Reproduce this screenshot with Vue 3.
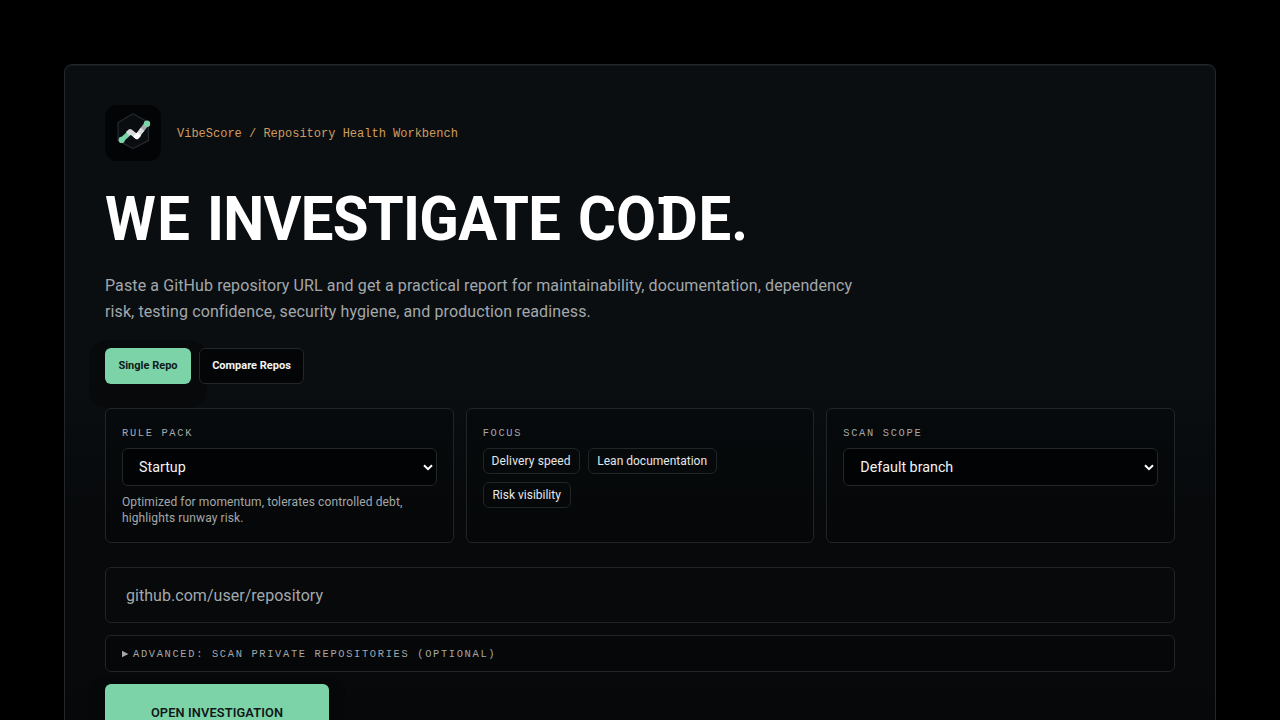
<script setup>
import { ref } from 'vue'

const focus = ['Delivery speed', 'Lean documentation', 'Risk visibility']
const pack = ref('Startup')
const scope = ref('Default branch')
</script>

<template>
  <main class="page">
    <section class="panel">
      <header class="brand">
        <div class="logo">
          <svg width="56" height="56" viewBox="0 0 56 56" fill="none">
            <path d="M28 8.8 43.4 17.5V35.5L28 43.6 13.1 35.5V17.5Z" fill="#0a0d10" stroke="#24292d" stroke-width="1.3" />
            <path d="M17.2 34.6 25.2 27.2" stroke="#7dd3a8" stroke-width="4.8" stroke-linecap="round" />
            <path d="M36.5 25.4 42 18.6" stroke="#a6a9ac" stroke-width="4.8" />
            <path d="M22.6 28.8 25.1 26.4 31.8 31.6 37.5 24.2" stroke="#d9dbdc" stroke-width="4.8" stroke-linejoin="round" />
            <path d="M29.8 30 31.8 31.8 34.4 29" stroke="#fff" stroke-width="4.8" stroke-linejoin="round" />
            <circle cx="16.7" cy="34.9" r="3.1" fill="#7dd3a8" />
            <circle cx="42" cy="18.8" r="3.2" fill="#7dd3a8" />
          </svg>
        </div>
        <p class="eyebrow">VibeScore / Repository Health Workbench</p>
      </header>

      <h1><span class="w1">WE</span> <span class="w2">INVESTIGATE</span> <span class="w3">CO<span class="slab">D</span>E.</span></h1>
      <p class="lead">Paste a GitHub repository URL and get a practical report for maintainability, documentation, dependency<br />risk, testing confidence, security hygiene, and production readiness.</p>

      <div class="tabs">
        <button class="tab active">Single Repo</button>
        <button class="tab other">Compare Repos</button>
      </div>

      <div class="cards">
        <div class="card">
          <div class="label">RULE PACK</div>
          <div class="select">
            <span>{{ pack }}</span>
            <svg width="10" height="7" viewBox="0 0 10 7"><path d="M1 1.2 5 5.2 9 1.2" fill="none" stroke="#fff" stroke-width="2" /></svg>
          </div>
          <p class="hint">Optimized for momentum, tolerates controlled debt,<br />highlights runway risk.</p>
        </div>
        <div class="card">
          <div class="label">FOCUS</div>
          <div class="chips">
            <span v-for="(item, i) in focus" :key="item" class="chip" :class="'chip' + i">{{ item }}</span>
          </div>
        </div>
        <div class="card">
          <div class="label">SCAN SCOPE</div>
          <div class="select wide">
            <span>{{ scope }}</span>
            <svg width="10" height="7" viewBox="0 0 10 7"><path d="M1 1.2 5 5.2 9 1.2" fill="none" stroke="#fff" stroke-width="2" /></svg>
          </div>
        </div>
      </div>

      <div class="url"><span>github.com/user/repository</span></div>
      <div class="advanced">
        <svg width="7" height="8" viewBox="0 0 7 8"><path d="M0 .8 6.4 4 0 7.2Z" fill="#a3a8ab" /></svg>
        <span>ADVANCED: SCAN PRIVATE REPOSITORIES (OPTIONAL)</span>
      </div>
      <button class="submit"><span>OPEN INVESTIGATION</span></button>
    </section>
  </main>
</template>

<style>
html,
body {
  background: #000;
  overflow: hidden;
}
</style>

<style scoped>
* {
  box-sizing: border-box;
}
.page {
  height: 720px;
  padding: 64px 64px 0;
  overflow: hidden;
  background: #000;
  font-family: Roboto, "Liberation Sans", sans-serif;
}
.panel {
  height: 900px;
  padding: 40px;
  border: 1px solid #22272a;
  border-radius: 8px;
  background: linear-gradient(180deg, #0a0e11 0, #0a0e11 310px, #07090b 450px, #07090b 600px, #050708 700px);
  box-shadow: inset 0 1px 0 #171b1e;
}
.brand {
  display: flex;
  align-items: center;
  gap: 16px;
  height: 56px;
}
.logo {
  width: 56px;
  height: 56px;
  border-radius: 12px;
  background: #030405;
}
.logo svg {
  display: block;
}
p,
h1 {
  margin: 0;
}
.eyebrow {
  padding-top: 2px;
  font: 12px/18px "Liberation Mono", monospace;
  color: #d09c5e;
  white-space: nowrap;
}
h1 {
  display: flex;
  margin-top: 27px;
  height: 64px;
  font: 700 60.5px/64px Roboto, sans-serif;
  color: #fff;
  white-space: nowrap;
}
h1 > span {
  display: block;
  transform-origin: 0 50%;
  transform: scaleX(0.96);
}
.w1 {
  width: 102px;
  letter-spacing: 1.5px;
}
.w2 {
  width: 371px;
  letter-spacing: -0.75px;
}
.slab {
  position: relative;
  margin-left: 4px;
  letter-spacing: 1px;
}
.slab::before,
.slab::after {
  content: "";
  position: absolute;
  left: -1px;
  width: 8px;
  height: 7px;
  background: #fff;
}
.slab::before {
  top: 13px;
}
.slab::after {
  bottom: 15px;
}
.lead {
  margin-top: 21px;
  font-size: 16px;
  line-height: 26px;
  letter-spacing: 0.106px;
  color: #a3a8ab;
  white-space: nowrap;
}
.tabs {
  display: flex;
  gap: 8px;
  margin-top: 23px;
}
button {
  font-family: inherit;
  border: 0;
  padding: 0;
  white-space: nowrap;
}
.tab {
  height: 36px;
  padding-bottom: 1px;
  border-radius: 6px;
  font-size: 11px;
  font-weight: 700;
}
.active {
  width: 86px;
  background: #7dd3a8;
  color: #10191a;
  box-shadow: 0 8px 0 16px #07090b;
}
.other {
  position: relative;
  width: 105px;
  border: 1px solid #22272a;
  background: #040506;
  color: #f2f4f5;
}
.cards {
  position: relative;
  display: grid;
  grid-template-columns: repeat(3, 1fr);
  gap: 12px;
  margin-top: 24px;
}
.card {
  height: 135px;
  padding: 16px;
  border: 1px solid #202528;
  border-radius: 6px;
  background: linear-gradient(180deg, #070a0c, #050708);
}
.label {
  height: 15px;
  margin-bottom: 8px;
  font: 10.4px/16px "Liberation Mono", monospace;
  letter-spacing: 1.66px;
  color: #a3a8ab;
}
.select {
  display: flex;
  align-items: center;
  justify-content: space-between;
  height: 38px;
  padding: 0 3px 0 16px;
  border: 1px solid #22272a;
  border-radius: 6px;
  background: #020304;
  color: #f2f4f5;
  font-size: 14.3px;
}
.hint {
  margin-top: 8px;
  font-size: 12px;
  line-height: 16px;
  letter-spacing: 0.11px;
  color: #a3a8ab;
  white-space: nowrap;
}
.chips {
  display: flex;
  flex-wrap: wrap;
  gap: 8px;
}
.chip {
  height: 26px;
  width: 97px;
  border: 1px solid #202528;
  border-radius: 6px;
  font-size: 12px;
  line-height: 24px;
  text-align: center;
  color: #e4e7e8;
  white-space: nowrap;
}
.chip0 {
  letter-spacing: 0.12px;
}
.chip1 {
  width: 129px;
}
.chip2 {
  width: 88px;
}
.url {
  display: flex;
  align-items: center;
  height: 56px;
  margin-top: 24px;
  padding-left: 20px;
  border: 1px solid #202528;
  border-radius: 6px;
  background: #07090b;
  font-size: 16px;
  letter-spacing: 0.04px;
  color: #a3a8ab;
}
.advanced {
  display: flex;
  align-items: center;
  gap: 4px;
  height: 37px;
  margin-top: 12px;
  padding-left: 16px;
  border: 1px solid #202528;
  border-radius: 6px;
  background: #050708;
  font: 10.4px/16px "Liberation Mono", monospace;
  letter-spacing: 1.66px;
  color: #a3a8ab;
}
.submit {
  display: block;
  width: 224px;
  height: 56px;
  margin-top: 12px;
  border-radius: 6px;
  background: #7dd3a8;
  color: #10191a;
  font-size: 12.8px;
  font-weight: 600;
  letter-spacing: 0.12px;
  box-shadow: 0 8px 0 16px #050708;
}
.advanced,
.url {
  position: relative;
}
</style>
